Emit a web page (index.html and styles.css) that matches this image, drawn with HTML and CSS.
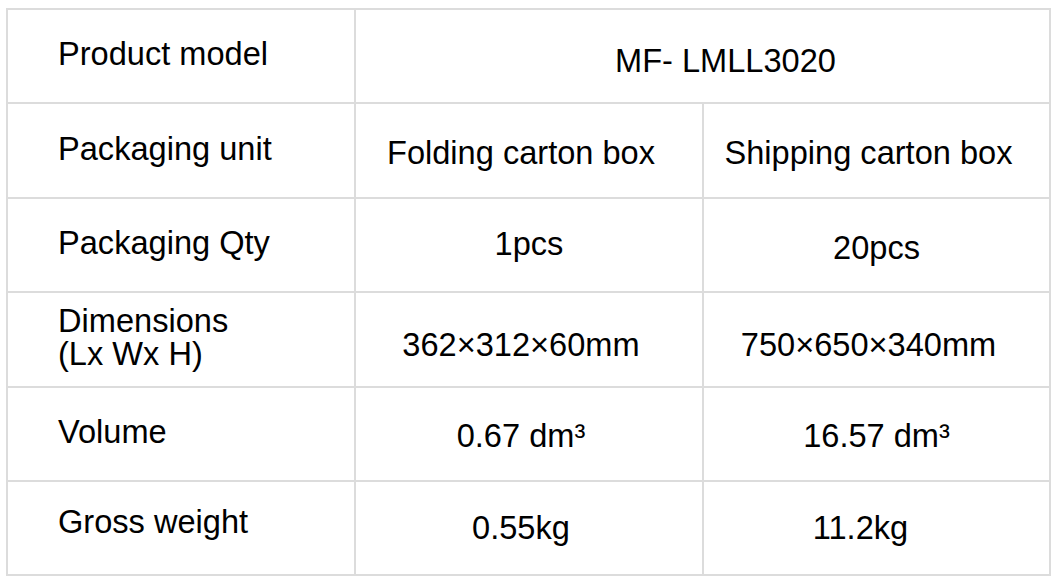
FILE: index.html
```html
<!DOCTYPE html>
<html lang="en">
<head>
<meta charset="utf-8">
<title>Packaging specification</title>
<link rel="stylesheet" href="styles.css">
</head>
<body>
<div class="spec">
  <div class="cell label">Product model</div>
  <div class="cell value span2 v-model">MF- LMLL3020</div>

  <div class="cell label">Packaging unit</div>
  <div class="cell value">Folding carton box</div>
  <div class="cell value">Shipping carton box</div>

  <div class="cell label">Packaging Qty</div>
  <div class="cell value v-center v-up">1pcs</div>
  <div class="cell value v-center v-down">20pcs</div>

  <div class="cell label multi">Dimensions<br>(Lx Wx H)</div>
  <div class="cell value v-dim">362×312×60mm</div>
  <div class="cell value v-dim">750×650×340mm</div>

  <div class="cell label">Volume</div>
  <div class="cell value">0.67 dm³</div>
  <div class="cell value v-center">16.57 dm³</div>

  <div class="cell label label-up">Gross weight</div>
  <div class="cell value v-last">0.55kg</div>
  <div class="cell value v-far v-last">11.2kg</div>
</div>
</body>
</html>
```

FILE: styles.css
```css
html, body {
  margin: 0;
  padding: 0;
  background: #ffffff;
}

body {
  font-family: "Liberation Sans", Arial, sans-serif;
  color: #000000;
}

.spec {
  display: grid;
  grid-template-columns: 348px 348px 347px;
  grid-template-rows: 94px 95px 94px 95px 94px 94px;
  margin: 8px 0 0 6px;
  width: 1045px;
  border-top: 2px solid #dcdcdc;
  border-left: 2px solid #dcdcdc;
  box-sizing: border-box;
}

.cell {
  box-sizing: border-box;
  border-right: 2px solid #dcdcdc;
  border-bottom: 2px solid #dcdcdc;
  display: flex;
  align-items: center;
  font-size: 32.6px;
  line-height: 1.15;
  white-space: nowrap;
}

.label {
  padding: 0 0 4px 50px;
  justify-content: flex-start;
}

.label.multi {
  line-height: 33px;
  padding-bottom: 6px;
}

.label-up {
  padding-bottom: 12px;
}

.value {
  justify-content: center;
  padding: 4px 16px 0 0;
}

.span2 {
  grid-column: span 2;
}

.v-model {
  padding: 9px 0 0 46px;
}

.v-center {
  padding-right: 0;
}

.v-up {
  padding-top: 0;
  padding-bottom: 2px;
}

.v-down {
  padding-top: 5px;
}

.v-dim {
  padding-top: 10px;
}

.v-last {
  padding-top: 0;
}

.v-far {
  padding-right: 32px;
}
```
